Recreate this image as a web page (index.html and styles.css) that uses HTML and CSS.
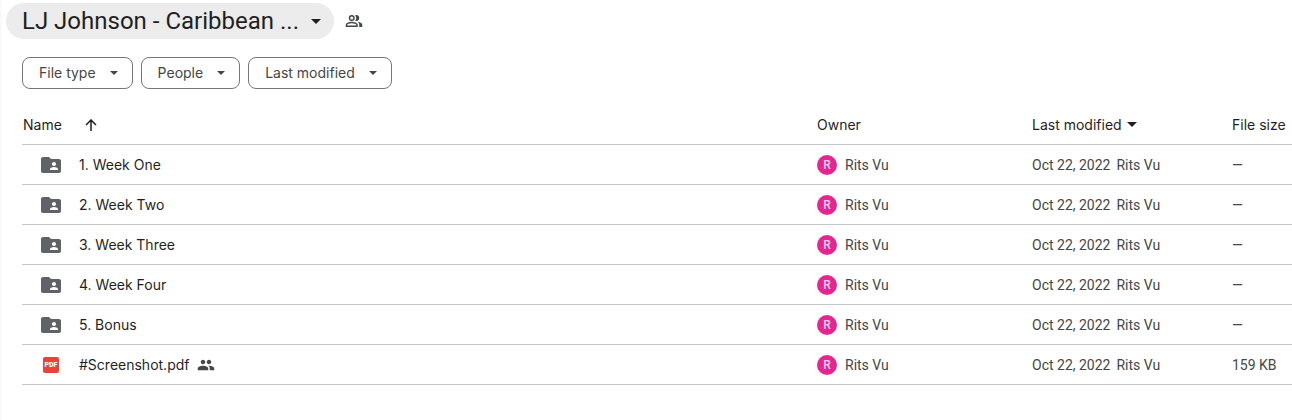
FILE: index.html
```html
<!DOCTYPE html>
<html lang="en">
<head>
<meta charset="utf-8">
<title>LJ Johnson - Caribbean</title>
<link rel="stylesheet" href="styles.css">
</head>
<body>
<svg class="defs" aria-hidden="true">
  <symbol id="caret" viewBox="0 0 10 5"><path d="M0 0h10L5 5z"/></symbol>
  <symbol id="folder" viewBox="0 0 24 24"><path d="M20 6h-8l-2-2H4c-1.100 0-2 .9-2 2v12c0 1.100.9 2 2 2h16c1.100 0 2-.9 2-2V8c0-1.100-.9-2-2-2zm-5 3c1.100 0 2 .9 2 2s-.9 2-2 2-2-.9-2-2 .9-2 2-2zm4 8h-8v-1c0-1.330 2.670-2 4-2s4 .67 4 2v1z" fill-rule="evenodd"/></symbol>
</svg>
<main class="drive">
  <header class="heading">
    <button class="title" type="button"><span>LJ Johnson - Caribbean ...</span><svg class="caret caret-title"><use href="#caret"/></svg></button>
    <button class="share" type="button" aria-label="Shared"><svg class="people" viewBox="0 0 24 24"><path fill-rule="evenodd" d="M9 12a4 4 0 1 0 0-8 4 4 0 0 0 0 8zm0-6a2 2 0 1 1 0 4 2 2 0 0 1 0-4zM9 13c-2.700 0-8 1.300-8 4v3h16v-3c0-2.700-5.300-4-8-4zm6 5H3v-1c0-.7 3.100-2 6-2s6 1.300 6 2zM15 12a4 4 0 1 0-1.500-7.700 6 6 0 0 1 0 7.400c.5.2 1 .3 1.500.3zM16.700 13.100c1.400 1 2.300 2.300 2.300 3.900v3h4v-3c0-2.200-3.500-3.500-6.300-3.900z"/></svg></button>
  </header>
  <div class="filters">
    <button class="chip" type="button">File type<svg class="caret caret-chip"><use href="#caret"/></svg></button>
    <button class="chip" type="button">People<svg class="caret caret-chip"><use href="#caret"/></svg></button>
    <button class="chip" type="button">Last modified<svg class="caret caret-chip"><use href="#caret"/></svg></button>
  </div>
  <table class="files">
    <thead>
      <tr>
        <th><div class="cell name-head">Name<svg class="arrow" viewBox="0 0 12 12"><path d="M6 12V1M1 6l5-5 5 5"/></svg></div></th>
        <th class="owner">Owner</th>
        <th class="modified"><div class="cell modified-head">Last modified<svg class="caret caret-title"><use href="#caret"/></svg></div></th>
        <th class="size">File size</th>
      </tr>
    </thead>
    <tbody>
      <tr><td><div class="cell name"><svg class="icon"><use href="#folder"/></svg>1. Week One</div></td><td><div class="cell person"><span class="avatar">R</span>Rits Vu</div></td><td><div class="cell date">Oct 22, 2022 <span>Rits Vu</span></div></td><td>—</td></tr>
      <tr><td><div class="cell name"><svg class="icon"><use href="#folder"/></svg>2. Week Two</div></td><td><div class="cell person"><span class="avatar">R</span>Rits Vu</div></td><td><div class="cell date">Oct 22, 2022 <span>Rits Vu</span></div></td><td>—</td></tr>
      <tr><td><div class="cell name"><svg class="icon"><use href="#folder"/></svg>3. Week Three</div></td><td><div class="cell person"><span class="avatar">R</span>Rits Vu</div></td><td><div class="cell date">Oct 22, 2022 <span>Rits Vu</span></div></td><td>—</td></tr>
      <tr><td><div class="cell name"><svg class="icon"><use href="#folder"/></svg>4. Week Four</div></td><td><div class="cell person"><span class="avatar">R</span>Rits Vu</div></td><td><div class="cell date">Oct 22, 2022 <span>Rits Vu</span></div></td><td>—</td></tr>
      <tr><td><div class="cell name"><svg class="icon"><use href="#folder"/></svg>5. Bonus</div></td><td><div class="cell person"><span class="avatar">R</span>Rits Vu</div></td><td><div class="cell date">Oct 22, 2022 <span>Rits Vu</span></div></td><td>—</td></tr>
      <tr><td><div class="cell name"><span class="pdf">PDF</span><span class="shared-name">#Screenshot.pdf<svg class="people" viewBox="0 0 24 24"><path d="M16 11c1.660 0 2.990-1.340 2.990-3S17.660 5 16 5s-3 1.340-3 3 1.340 3 3 3zm-8 0c1.660 0 2.990-1.340 2.990-3S9.660 5 8 5 5 6.340 5 8s1.340 3 3 3zm0 2c-2.330 0-7 1.170-7 3.500V19h14v-2.500C15 14.170 10.330 13 8 13zm8 0c-.29 0-.62.020-.97.050 1.160.84 1.970 1.970 1.970 3.450V19h6v-2.500c0-2.330-4.670-3.500-7-3.500z"/></svg></span></div></td><td><div class="cell person"><span class="avatar">R</span>Rits Vu</div></td><td><div class="cell date">Oct 22, 2022 <span>Rits Vu</span></div></td><td>159 KB</td></tr>
    </tbody>
  </table>
</main>
</body>
</html>
```
FILE: styles.css
```css
* { box-sizing: border-box; }
body { margin: 0; background: #fff; color: #1f1f1f; font: 14px/20px Inter, Roboto, sans-serif; }
button { font: inherit; color: inherit; background: none; border: 0; padding: 0; }
svg { flex: none; fill: currentColor; }
.defs { position: absolute; width: 0; height: 0; }
.drive { min-height: 100vh; padding: 3px 0 0 4px; border-left: 2px solid #f8fafd; }
.heading { display: flex; align-items: center; gap: 11px; }
.title { display: flex; align-items: center; justify-content: space-between; gap: 12px; height: 36px; padding: 0 13px 0 16px; border-radius: 18px; background: #ececec; font-family: Roboto, sans-serif; font-size: 24px; line-height: 32px; white-space: nowrap; }
.share { display: flex; color: #444746; }
.people { width: 18px; height: 18px; }
.filters { display: flex; gap: 8px; padding: 18px 16px 16px; }
.chip { display: flex; align-items: center; gap: 14px; height: 32px; padding: 0 14px 0 16px; border: 1px solid #747775; border-radius: 8px; color: #444746; }
.caret-title { width: 10px; height: 5px; }
.caret-chip { width: 8px; height: 4px; }
.files { width: calc(100% - 16px); margin-left: 16px; border-collapse: separate; border-spacing: 0; table-layout: fixed; }
.owner { width: 215px; }
.modified { width: 200px; }
.size { width: 60px; }
th, td { height: 40px; padding: 0; border-bottom: 1px solid #c7c7c7; text-align: left; white-space: nowrap; }
th { font-weight: 400; }
td { color: #444746; font-family: Roboto, sans-serif; }
.cell { display: flex; align-items: center; }
.name-head { gap: 23px; padding-left: 1px; }
.arrow { width: 12px; height: 12px; fill: none; stroke: currentColor; stroke-width: 1.5; }
.modified-head { gap: 5px; }
.name { gap: 16px; padding-left: 17px; color: #1f1f1f; font-family: Inter, Roboto, sans-serif; }
.icon { width: 24px; height: 24px; color: #5f6368; }
.pdf { width: 16px; height: 16px; margin: 0 4px; border-radius: 2px; background: #ea4335; color: #fff; font-family: Roboto, sans-serif; font-size: 7px; font-weight: 900; line-height: 16px; text-align: center; }
.shared-name { display: flex; align-items: center; gap: 8px; }
.shared-name .people { color: #444746; }
.person { gap: 8px; }
.avatar { width: 20px; height: 20px; border-radius: 50%; background: #e52592; color: #fbd3e9; font-size: 12px; font-weight: 500; text-align: center; }
.date { gap: 6px; }
```
